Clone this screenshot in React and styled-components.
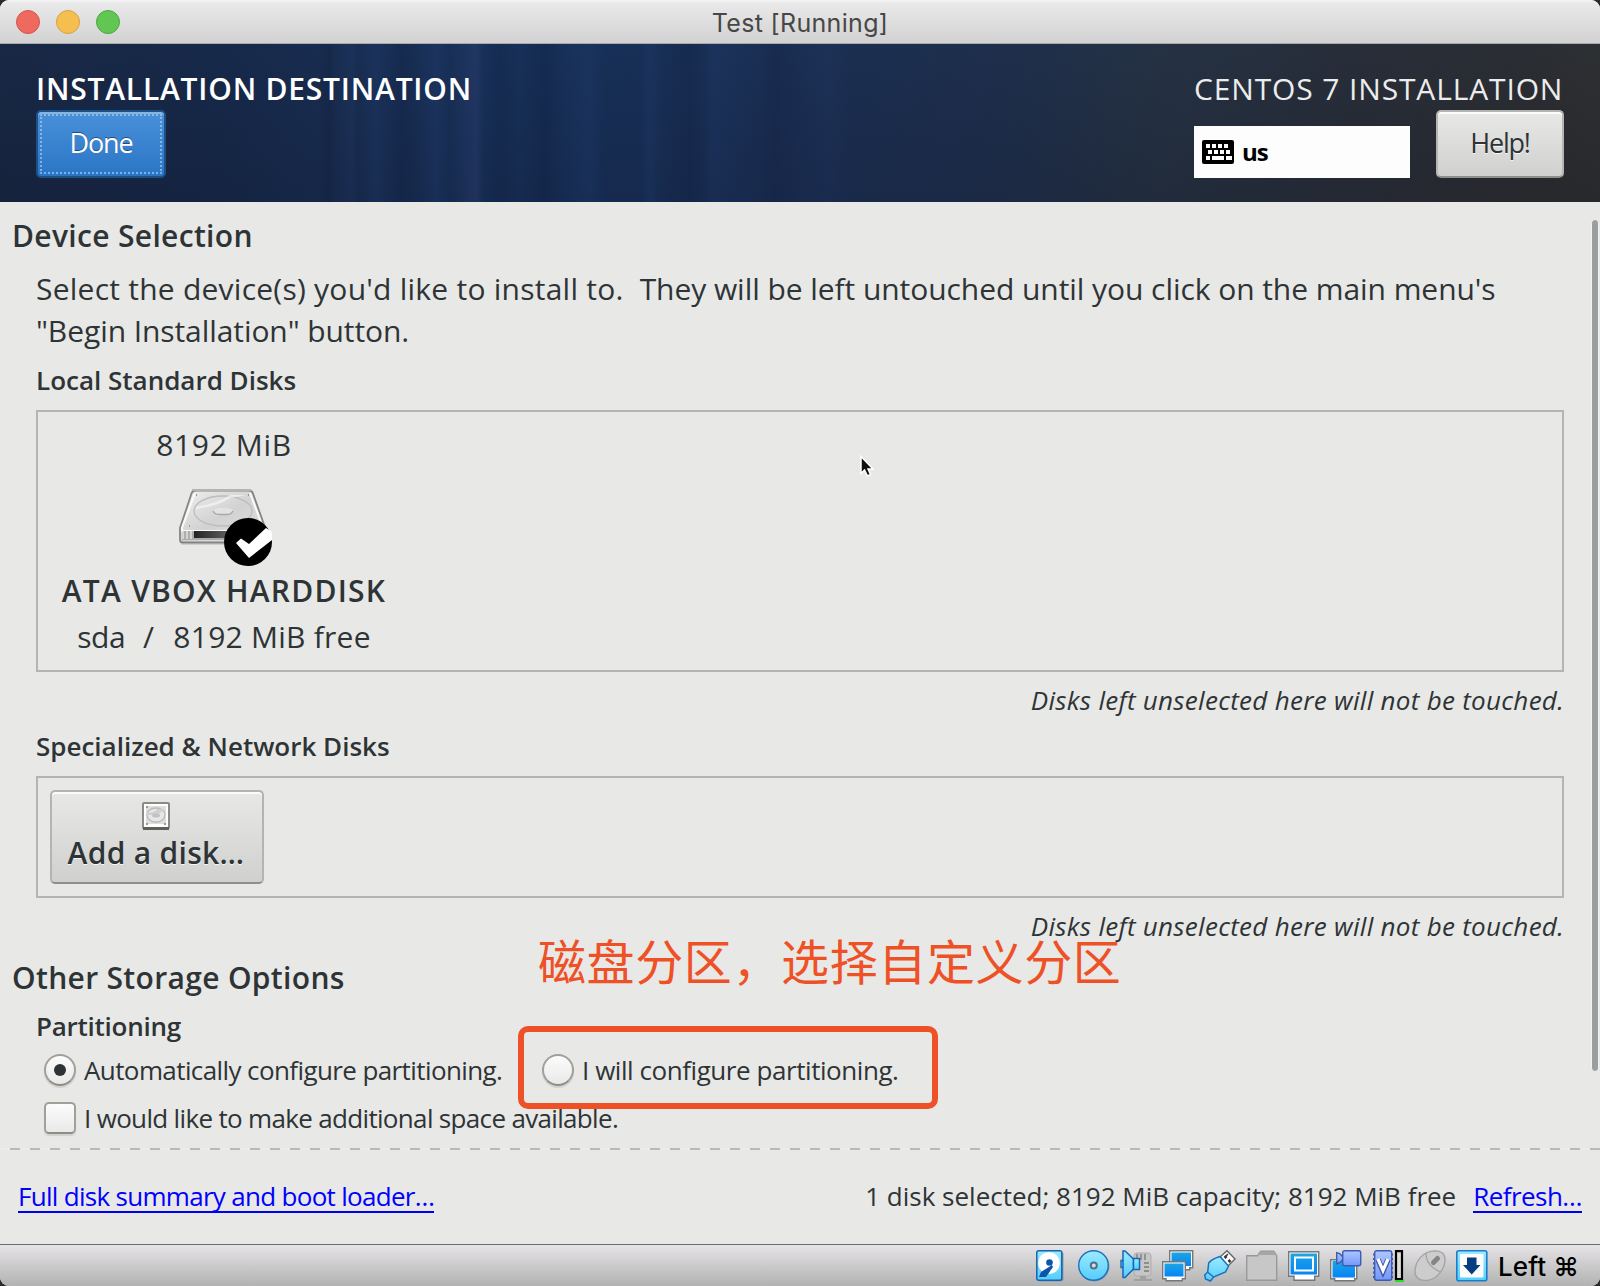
import React from 'react';
import styled, { createGlobalStyle, css } from 'styled-components';

const Global = createGlobalStyle`
  * { box-sizing: border-box; }
  body { margin: 0; background: #2b2b2d; }
`;

const ink = '#2e3436';
const annotationRed = '#ef5126';
const uiFont = '"Open Sans", "Noto Sans", sans-serif';
const macFont = 'Inter, "Liberation Sans", sans-serif';

const Window = styled.div`
  position: relative;
  width: 1600px;
  height: 1286px;
  display: flex;
  flex-direction: column;
  overflow: hidden;
  border-radius: 9px;
  background: #e8e8e6;
  color: ${ink};
  font-family: ${uiFont};
  white-space: nowrap;
`;

const TitleBar = styled.div`
  display: grid;
  grid-template-columns: 1fr auto 1fr;
  align-items: center;
  height: 44px;
  padding: 0 16px;
  border-bottom: 1px solid #a9aaa7;
  background: linear-gradient(#f6f6f6 0, #e9e9e9 3px, #d2d2d2 100%);
  font: 400 25px/30px ${macFont};
  letter-spacing: 0.32px;
  color: #474747;
`;

const WindowTitle = styled.span`
  padding-top: 2px;
`;

const Lights = styled.div`
  display: flex;
  gap: 16px;
`;

const Light = styled.span`
  width: 24px;
  height: 24px;
  border-radius: 50%;
  border: 1px solid ${(p) => p.$edge};
  background: ${(p) => p.$fill};
`;

const Header = styled.header`
  display: flex;
  justify-content: space-between;
  height: 158px;
  padding: 25px 36px 0;
  background:
    linear-gradient(90deg, transparent 640px, rgba(50, 90, 160, 0.1) 650px, transparent 662px, rgba(8, 15, 45, 0.12) 690px, transparent 705px,
      rgba(50, 90, 160, 0.08) 712px, transparent 760px, rgba(8, 15, 45, 0.1) 775px, transparent 800px, rgba(50, 90, 160, 0.06) 830px, transparent 850px),
    linear-gradient(90deg, transparent 318px, rgba(8, 15, 40, 0.14) 330px, transparent 334px, rgba(60, 100, 170, 0.08) 352px, transparent 358px,
      rgba(50, 90, 160, 0.1) 376px, rgba(8, 15, 45, 0.12) 402px, transparent 418px, rgba(60, 90, 170, 0.1) 436px, transparent 450px,
      rgba(80, 90, 160, 0.16) 476px, transparent 484px, rgba(8, 15, 45, 0.12) 500px, transparent 520px, rgba(8, 15, 45, 0.16) 545px, transparent 560px,
      rgba(50, 90, 160, 0.1) 590px, transparent 604px),
    linear-gradient(rgba(30, 65, 120, 0.08), rgba(10, 15, 40, 0.14)),
    linear-gradient(90deg, #182640 0, #162746 220px, #182b4d 330px, #172f55 480px, #172e54 600px, #1a2d50 800px, #1e2d48 1000px, #25303f 1160px, #282c34 1350px, #2c2c2d 1540px, #2e2e2d 1600px);
`;

const HeaderSide = styled.div`
  display: flex;
  flex-direction: column;
  gap: 1px;
`;

const HeaderTitle = styled.div`
  height: 40px;
  font-size: 30px;
  line-height: 40px;
  font-weight: ${(p) => (p.$strong ? 600 : 400)};
  letter-spacing: ${(p) => (p.$strong ? 0.78 : 0.86)}px;
  color: ${(p) => (p.$strong ? '#fff' : '#ececec')};
`;

const HeaderActions = styled.div`
  display: flex;
  align-items: flex-end;
  justify-content: space-between;
  width: 370px;
`;

const lightButton = css`
  border: 2px solid #b4b4b0;
  border-bottom-color: #8f8f8a;
  border-radius: 5px;
  background: linear-gradient(#e8e8e6, #d0d0ce);
  box-shadow: inset 0 2px 0 #fcfcfc;
  color: ${ink};
  text-shadow: 0 1px 0 rgba(255, 255, 255, 0.8);
`;

const Button = styled.button`
  width: ${(p) => p.$width}px;
  height: 68px;
  padding: 0 0 3px;
  font: 400 27px/34px ${uiFont};
  ${lightButton}
  letter-spacing: -1.2px;
  ${(p) =>
    p.$primary &&
    css`
      border-color: #1c5187;
      background: linear-gradient(#4a90d9, #2a76c6);
      box-shadow: inset 0 2px 0 #85b3e2;
      outline: 2px dotted rgba(185, 215, 242, 0.6);
      outline-offset: -6px;
      color: #fff;
      text-shadow: 0 -1px 0 rgba(20, 50, 90, 0.7);
      letter-spacing: -1.1px;
    `}
`;

const KeyboardLayout = styled.div`
  display: flex;
  align-items: center;
  gap: 8px;
  width: 216px;
  height: 52px;
  padding-left: 8px;
  background: #fdfdfd;
  color: #000;
  font-size: 24px;
  line-height: 34px;
  font-weight: 700;
  letter-spacing: -1px;
`;

const Content = styled.main`
  display: flex;
  flex-direction: column;
  height: 946px;
  padding: 14px 36px 0;
`;

const SectionTitle = styled.h2`
  margin: ${(p) => p.$top || 0}px 0 0 -24px;
  height: 40px;
  font-size: 30px;
  line-height: 40px;
  font-weight: 600;
  letter-spacing: 0.33px;
`;

const Intro = styled.p`
  margin: 12px 0 11px;
  font-size: 30px;
  line-height: 42px;
`;

const Phrase = styled.span`
  letter-spacing: ${(p) => p.$spacing}px;
`;

const GroupTitle = styled.h3`
  margin: ${(p) => p.$top || 0}px 0 0;
  height: 34px;
  font-size: 26px;
  line-height: 34px;
  font-weight: 600;
  letter-spacing: ${(p) => p.$spacing || 0}px;
`;

const Frame = styled.section`
  display: flex;
  align-items: flex-start;
  height: ${(p) => p.$height}px;
  margin-top: ${(p) => p.$top}px;
  padding: ${(p) => p.$pad}px 12px;
  border: 2px solid #b4b4b2;
`;

const Note = styled.div`
  align-self: flex-end;
  height: 34px;
  margin-top: 11px;
  font-size: 26px;
  font-style: italic;
  line-height: 34px;
  letter-spacing: 0.29px;
`;

const Disk = styled.div`
  display: flex;
  flex-direction: column;
  align-items: center;
  width: 348px;
`;

const DiskText = styled.div`
  display: flex;
  height: 40px;
  margin-top: ${(p) => p.$top || 0}px;
  font-size: 30px;
  line-height: 40px;
  font-weight: ${(p) => (p.$strong ? 600 : 400)};
  letter-spacing: ${(p) => p.$spacing}px;
`;

const DiskName = styled.span`
  letter-spacing: -0.5px;
`;

const Slash = styled.span`
  margin: 0 19px 0 18px;
`;

const DiskIconSlot = styled.div`
  height: 106px;
  padding-top: 24px;
`;

const AddDisk = styled.button`
  display: flex;
  flex-direction: column;
  align-items: center;
  gap: 3px;
  width: 214px;
  height: 94px;
  padding: 10px 2px 0 0;
  font: 600 30px/40px ${uiFont};
  ${lightButton}
  letter-spacing: 0.3px;
`;

const OptionRow = styled.div`
  display: flex;
  align-items: flex-start;
  height: 34px;
  margin: ${(p) => p.$top}px 0 0 8px;
  font-size: 26px;
  line-height: 34px;
`;

const Option = styled.label`
  display: flex;
  gap: 8px;
  width: ${(p) => (p.$width ? `${p.$width}px` : 'auto')};
  letter-spacing: ${(p) => p.$spacing}px;
`;

const Mark = styled.span`
  display: grid;
  place-items: center;
  flex: none;
  width: 32px;
  height: 32px;
  margin-top: 1px;
  border: 2px solid #a09f98;
  border-bottom-color: #8d8c85;
  border-radius: ${(p) => (p.$round ? '50%' : '5px')};
  background: linear-gradient(#fcfcfc, #e9e9e9);
  box-shadow: 0 2px 1px rgba(0, 0, 0, 0.1);

  &::after {
    content: '';
    width: 12px;
    height: 12px;
    border-radius: 50%;
    background: ${(p) => (p.$checked ? ink : 'transparent')};
  }
`;

const Divider = styled.div`
  height: 2px;
  background: repeating-linear-gradient(90deg, #b9b9b7 0 10px, #ececea 10px 20px) 10px 0 no-repeat, #ececea;
`;

const Footer = styled.footer`
  display: flex;
  align-items: flex-start;
  justify-content: space-between;
  height: 94px;
  padding: 29px 18px 0;
  font-size: 26px;
  line-height: 34px;
`;

const FooterSide = styled.div`
  display: flex;
  gap: 17px;
`;

const Link = styled.a`
  height: 34px;
  border-bottom: 2px solid #0000ee;
  color: #0000ff;
  letter-spacing: ${(p) => p.$spacing}px;
`;

const StatusBar = styled.div`
  display: flex;
  align-items: flex-start;
  gap: 10px;
  height: 42px;
  padding: 5px 25px 0 0;
  justify-content: flex-end;
  border-top: 1px solid #6d6b6b;
  background: linear-gradient(#e6e4e6, #b2b2b2);
`;

const HostKey = styled.span`
  width: 77px;
  font: 500 26px/34px ${macFont};
  letter-spacing: 0.1px;
  color: #000;
`;

const ScrollThumb = styled.div`
  position: absolute;
  left: 1591px;
  top: 219px;
  width: 8px;
  height: 853px;
  border: 1px solid #f2f2f1;
  border-radius: 4px;
  background: #999e9e;
`;

const AnnotationText = styled.div`
  position: absolute;
  left: 538px;
  top: 935px;
  font: 400 48px/48px "Noto Sans CJK SC", sans-serif;
  letter-spacing: 0.62px;
  color: ${annotationRed};
`;

const AnnotationBox = styled.div`
  position: absolute;
  left: 518px;
  top: 1026px;
  width: 420px;
  height: 83px;
  border: 6px solid ${annotationRed};
  border-radius: 10px;
`;

const Pointer = styled.svg`
  position: absolute;
  left: 859px;
  top: 455px;
`;

const KeyboardIcon = () => (
  <svg width="32" height="24" viewBox="0 0 32 24">
    <rect width="32" height="24" rx="2" />
    <path
      fill="#fff"
      d="M4 4h4v4H4zM10 4h4v4h-4zM16 4h4v4h-4zM22 4h4v4h-4zM6 10h4v4H6zM12 10h4v4h-4zM18 10h4v4h-4zM24 10h4v4h-4zM4 16h4v4H4zM10 16h12v4H10zM24 16h6v4h-6z"
    />
  </svg>
);

const HardDiskIcon = () => (
  <svg width="96" height="80" viewBox="0 0 96 80">
    <defs>
      <linearGradient id="lid" x1="0" y1="0" x2="1" y2="1">
        <stop offset="0" stopColor="#f0f0f0" />
        <stop offset="0.5" stopColor="#d2d2d2" />
        <stop offset="1" stopColor="#e2e2e2" />
      </linearGradient>
      <linearGradient id="slot">
        <stop offset="0" stopColor="#222" />
        <stop offset="1" stopColor="#999" />
      </linearGradient>
    </defs>
    <path d="M3 53h82v3H6z" fill="#bdbdbb" opacity=".6" />
    <path d="M20 1.500h53q3 0 4 3l12 34v13q0 2-3 2H7q-3 0-3-3V39L15.500 4.500q1-3 4.500-3z" fill="url(#lid)" stroke="#858682" strokeWidth="1.800" />
    <path d="M16 1h59" stroke="#b4b5ac" strokeWidth="2" />
    <path d="M19 4 6 39v3h80" fill="none" stroke="#fafafa" strokeWidth="2" />
    <path d="M74 4l12 32" stroke="#fafafa" strokeWidth="2" />
    <path d="M6 42h82v9H6z" fill="#aaa" />
    <path d="M18 42h66v7H18z" fill="url(#slot)" />
    <path d="M6 42h10v8H6z" fill="#d4d4d2" />
    <path d="M9 42v8M13 42v8" stroke="#888" />
    <ellipse cx="47" cy="22" rx="29" ry="15" fill="none" stroke="#bdbdbd" strokeWidth="1.300" />
    <path d="M20 18Q42 14 54 6h17L54 9Q43 17 20 20z" fill="#f5f5f5" opacity=".7" />
    <path d="M37 22q2-3 6-3h8q4 0 6 3q-2 3.500-6 3.500h-8q-4 0-6-3.500z" fill="#e2e2e2" />
    <path d="M37 22q2 3.500 6 3.500h8q4 0 6-3.500" fill="none" stroke="#a8a8a8" strokeWidth="1.400" />
    <path d="M20 6h1M13 37h1M72 6h1" stroke="#999" strokeWidth="2" />
    <circle cx="72" cy="53" r="24" fill="#000" />
    <path d="M60 54l5-4.500 8 5.500 17-16 5 3q2 4 1 9L73 69z" fill="#fff" />
  </svg>
);

const SmallDiskIcon = () => (
  <svg width="28" height="28" viewBox="0 0 28 28">
    <rect x="1" y="1" width="26" height="25" rx="1" fill="#fff" stroke="#8b8b86" strokeWidth="2" />
    <path d="M1 26.500h26" stroke="#5e5e5a" strokeWidth="3" />
    <rect x="4" y="4" width="20" height="18" fill="#dedede" />
    <ellipse cx="14" cy="13" rx="9" ry="7" fill="#e8e8e8" stroke="#bbb" strokeWidth="1.300" />
    <path d="M5 10q6 2 10-3h7l-6 6H5z" fill="#d0d0d0" />
    <ellipse cx="14" cy="13.500" rx="4" ry="2" fill="#c2c2c2" />
    <path d="M4 22h2M22 22h2M4 5h2" stroke="#999" strokeWidth="2" />
  </svg>
);

const StatusIcon = ({ children }) => (
  <svg width="32" height="32" viewBox="0 0 32 32">
    {children}
  </svg>
);

const Definitions = styled.svg`
  position: absolute;
`;

const StatusGradients = () => (
  <Definitions width="0" height="0">
    <defs>
      <linearGradient id="sky" x1="0" y1="0" x2="0" y2="1">
        <stop offset="0" stopColor="#9cebff" />
        <stop offset="1" stopColor="#55cdfd" />
      </linearGradient>
      <linearGradient id="screen" x1="0" y1="0" x2="0" y2="1">
        <stop offset="0" stopColor="#1ba5e3" />
        <stop offset="1" stopColor="#0784f6" />
      </linearGradient>
      <linearGradient id="violet" x1="0" y1="0" x2="0" y2="1">
        <stop offset="0" stopColor="#adc5ff" />
        <stop offset="1" stopColor="#7398fa" />
      </linearGradient>
    </defs>
  </Definitions>
);

const StatusIcons = () => (
  <>
    <StatusIcon>
      <rect x="1.500" y="2" width="26" height="29.500" rx="2" fill="#8d9aa0" />
      <rect x=".8" y=".8" width="25" height="29.500" rx="2" fill="url(#sky)" stroke="#1563b4" strokeWidth="1.500" />
      <circle cx="13" cy="13" r="10.800" fill="#fff" />
      <circle cx="13.500" cy="12.500" r="3.300" fill="#0c55a8" />
      <path d="M3 27l2-5 11-7 1 2-7 10z" fill="#0c55a8" />
    </StatusIcon>
    <StatusIcon>
      <circle cx="16.500" cy="16.500" r="15" fill="#8d9aa0" />
      <circle cx="15.500" cy="15.500" r="14.800" fill="url(#sky)" stroke="#1d70bd" strokeWidth="1.400" />
      <circle cx="15.800" cy="15.500" r="3" fill="#d5dde0" stroke="#4f7187" strokeWidth="2" />
    </StatusIcon>
    <StatusIcon>
      <rect x="14" y="3" width="17" height="23" rx="3" fill="#c6c6c6" stroke="#adadad" />
      <path d="M17 4v6M21 4v6M25 4v6M24 13h5M24 17h5M24 21h5" stroke="#8d8d8d" strokeWidth="1.800" />
      <path d="M20 26h6v3h6v2H14v-2h6z" fill="#a1a1a1" />
      <path d="M1 10.500h3v7H1z" fill="#7edcff" stroke="#1767b7" strokeWidth="1.400" />
      <path d="M3 1h2l8.500 8V19L5 27.500H3z" fill="url(#sky)" stroke="#1767b7" strokeWidth="1.500" />
      <path d="M13.500 8.500h6v11h-6z" fill="url(#sky)" stroke="#1767b7" strokeWidth="1.500" />
    </StatusIcon>
    <StatusIcon>
      <path d="M7.700.7h23v17h-3v2h-9v-2h-11z" fill="#fff" stroke="#777" strokeWidth="1.400" />
      <path d="M9.500 2.500h19.500v13.500H9.500z" fill="url(#screen)" />
      <path d="M.7 11.700h22.600v17h-3v2H4v-2H.7z" fill="#fff" stroke="#777" strokeWidth="1.400" />
      <path d="M2.500 13.500h19v13h-19z" fill="url(#screen)" />
    </StatusIcon>
    <StatusIcon>
      <path d="M16 7l7-6.300L31 9l-7 7z" fill="#fafafa" stroke="#666" strokeWidth="1.400" />
      <path d="M20.500 6l2 2M24.500 10l2 2M22.500 4.500l1 1" stroke="#333" strokeWidth="2.500" />
      <path d="M16 6.500 24.500 16l-3 6-12 5-3 4-5-2-.8-4 3-3 1-9q3-4 11.300-6.500z" fill="url(#sky)" stroke="#1b6fc0" strokeWidth="1.500" />
      <path d="M3.500 22l6 5" stroke="#1b6fc0" strokeWidth="1.300" />
    </StatusIcon>
    <StatusIcon>
      <path d="M.7 5.700h11l3-4.500h13l3 4.500v24.500H.7z" fill="#c7c7c7" stroke="#999" strokeWidth="1.400" />
      <path d="M12 5l2.500-3.500h13L30 5z" fill="#a6a6a6" />
    </StatusIcon>
    <StatusIcon>
      <path d="M.7 1.700h30v24.600h-4v4H6v-4H.7z" fill="#fff" stroke="#777" strokeWidth="1.400" />
      <path d="M2.500 3.500h26.500v21H2.500z" fill="url(#screen)" />
      <path d="M7 7.500h18v13H7z" fill="none" stroke="#fff" strokeWidth="2" />
    </StatusIcon>
    <StatusIcon>
      <path d="M.7 9.700h26v19h-2v2h-20v-2h-4z" fill="#fff" stroke="#777" strokeWidth="1.400" />
      <path d="M2.500 11h22.500v16.500H2.500z" fill="url(#screen)" />
      <path d="M6.700 2.700l3 1 3 3v3l-3 3-3 1z" fill="url(#violet)" stroke="#3e5bb0" strokeWidth="1.400" />
      <rect x="12.700" y=".7" width="18" height="15" rx="2" fill="url(#violet)" stroke="#3e5bb0" strokeWidth="1.400" />
    </StatusIcon>
    <StatusIcon>
      <path d="M1 4.500h20M1 9h20M1 13.500h20M1 18h20M1 22.500h20M1 27h20" stroke="#3e5bb0" strokeWidth="1.800" />
      <rect x="2.700" y=".7" width="17" height="29.600" rx="2" fill="url(#violet)" stroke="#3e5bb0" strokeWidth="1.400" />
      <path d="M6 9.500l5 11.500 5-11.500" fill="none" stroke="#4053a3" strokeWidth="5.500" />
      <path d="M6 9l5 11.500L16 9" fill="none" stroke="#fff" strokeWidth="3.200" />
      <path d="M24 1.200h6v28h-6z" fill="#dcdcdc" stroke="#000" strokeWidth="2.200" />
      <path d="M23 31h9" stroke="#25e025" strokeWidth="2" />
    </StatusIcon>
    <StatusIcon>
      <path d="M21 .9C9 1 1 11 1 22c0 5 4 8.500 10 8.500 12 0 20-12 20-21C31 4 27 .9 21 .9z" fill="#cdcdcd" stroke="#a4a4a4" strokeWidth="1.400" />
      <path d="M12 3c0 8 5 15 14.500 19" fill="none" stroke="#a4a4a4" strokeWidth="1.300" />
      <path d="M19.500 12.500l4-4" stroke="#858585" strokeWidth="5" strokeLinecap="round" />
    </StatusIcon>
    <StatusIcon>
      <rect x=".8" y=".8" width="30" height="30" rx="2" fill="url(#sky)" stroke="#1b7dc9" strokeWidth="1.600" />
      <rect x="4" y="4" width="23.500" height="23.500" rx="1" fill="#fcfcfc" />
      <path d="M11 7.500h9.500v7.500h4L15.700 24.500 7 15h4z" fill="#063c80" />
    </StatusIcon>
  </>
);

export default function App() {
  return (
    <>
      <Global />
      <Window>
        <StatusGradients />
        <TitleBar>
          <Lights>
            <Light $fill="#ee6a5f" $edge="#d5574c" />
            <Light $fill="#f5bf4f" $edge="#d8a140" />
            <Light $fill="#61c654" $edge="#50a73f" />
          </Lights>
          <WindowTitle>Test [Running]</WindowTitle>
        </TitleBar>

        <Header>
          <HeaderSide>
            <HeaderTitle $strong>INSTALLATION DESTINATION</HeaderTitle>
            <Button $primary $width={130}>Done</Button>
          </HeaderSide>
          <HeaderSide>
            <HeaderTitle>CENTOS 7 INSTALLATION</HeaderTitle>
            <HeaderActions>
              <KeyboardLayout>
                <KeyboardIcon />
                us
              </KeyboardLayout>
              <Button $width={128}>Help!</Button>
            </HeaderActions>
          </HeaderSide>
        </Header>

        <Content>
          <SectionTitle>Device Selection</SectionTitle>
          <Intro>
            <Phrase $spacing={0.24}>Select the device(s) you'd like to install to.&nbsp; </Phrase>
            <Phrase $spacing={-0.06}>They will be left untouched until you click on the main menu's</Phrase>
            <br />
            <Phrase $spacing={-0.08}>"Begin Installation" button.</Phrase>
          </Intro>
          <GroupTitle>Local Standard Disks</GroupTitle>
          <Frame $top={13} $height={262} $pad={13}>
            <Disk>
              <DiskText $spacing={0.65}>8192 MiB</DiskText>
              <DiskIconSlot>
                <HardDiskIcon />
              </DiskIconSlot>
              <DiskText $strong $spacing={1.25}>ATA VBOX HARDDISK</DiskText>
              <DiskText $top={6} $spacing={0.25}>
                <DiskName>sda</DiskName>
                <Slash>/</Slash>
                <span>8192 MiB free</span>
              </DiskText>
            </Disk>
          </Frame>
          <Note>Disks left unselected here will not be touched.</Note>
          <GroupTitle $top={12}>Specialized &amp; Network Disks</GroupTitle>
          <Frame $top={13} $height={122} $pad={12}>
            <AddDisk>
              <SmallDiskIcon />
              Add a disk…
            </AddDisk>
          </Frame>
          <Note>Disks left unselected here will not be touched.</Note>
          <SectionTitle $top={15}>Other Storage Options</SectionTitle>
          <GroupTitle $top={11} $spacing={-0.25}>Partitioning</GroupTitle>
          <OptionRow $top={10}>
            <Option $spacing={-0.6} $width={498}>
              <Mark $round $checked />
              Automatically configure partitioning.
            </Option>
            <Option $spacing={-0.44}>
              <Mark $round />
              I will configure partitioning.
            </Option>
          </OptionRow>
          <OptionRow $top={14}>
            <Option $spacing={-0.67}>
              <Mark />
              I would like to make additional space available.
            </Option>
          </OptionRow>
        </Content>

        <Divider />
        <Footer>
          <Link $spacing={-0.7}>Full disk summary and boot loader…</Link>
          <FooterSide>
            <span>1 disk selected; 8192 MiB capacity; 8192 MiB free</span>
            <Link $spacing={-0.55}>Refresh…</Link>
          </FooterSide>
        </Footer>

        <StatusBar>
          <StatusIcons />
          <HostKey>Left ⌘</HostKey>
        </StatusBar>

        <ScrollThumb />
        <AnnotationText>磁盘分区，选择自定义分区</AnnotationText>
        <AnnotationBox />
        <Pointer width="18" height="24" viewBox="0 0 18 24">
          <path d="M2 1.500v17l3.500-3.500 3 6 3-1.500-2.500-5.500h5z" fill="#111" stroke="#fff" strokeWidth="1.500" />
        </Pointer>
      </Window>
    </>
  );
}
